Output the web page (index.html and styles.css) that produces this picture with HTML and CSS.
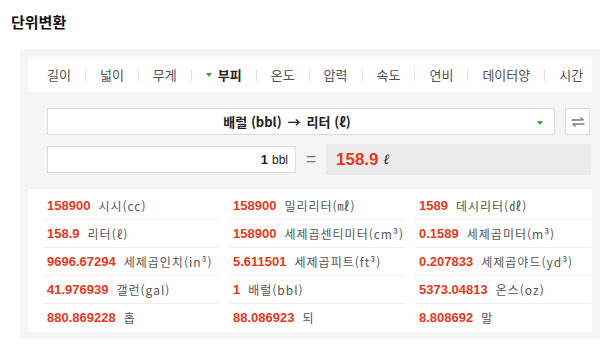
FILE: index.html
```html
<!DOCTYPE html>
<html lang="ko">
<head>
  <meta charset="UTF-8" />
  <title>단위변환</title>
  <link rel="stylesheet" href="styles.css">
</head>
<body>
  <h2 class="title">단위변환</h2>

  <div class="converter">
    <ul class="tabs">
      <li>길이</li>
      <li>넓이</li>
      <li>무게</li>
      <li class="on"><span class="tri"></span>부피</li>
      <li>온도</li>
      <li>압력</li>
      <li>속도</li>
      <li>연비</li>
      <li>데이터양</li>
      <li>시간</li>
    </ul>

    <div class="form">
      <div class="form-row">
        <div class="select">배럴 (bbl) <span class="arrow">→</span> 리터 (ℓ)<span class="caret"></span></div>
        <button class="swap" type="button">
          <svg width="14" height="10" viewBox="0 0 14 10">
            <path d="M0.5 3h12M9.5 0.5l3 2.5" stroke="#7a7a7a" stroke-width="1.3" fill="none"/>
            <path d="M13.5 7h-12M4.5 9.5l-3-2.5" stroke="#7a7a7a" stroke-width="1.3" fill="none"/>
          </svg>
        </button>
      </div>
      <div class="form-row">
        <div class="input"><b>1</b> bbl</div>
        <span class="equals">=</span>
        <div class="output"><span class="value">158.9</span> <span class="unit">ℓ</span></div>
      </div>
    </div>

    <ul class="results">
      <li><em>158900</em>시시(cc)</li>
      <li><em>158900</em>밀리리터(㎖)</li>
      <li><em>1589</em>데시리터(㎗)</li>
      <li><em>158.9</em>리터(ℓ)</li>
      <li><em>158900</em>세제곱센티미터(cm³)</li>
      <li><em>0.1589</em>세제곱미터(m³)</li>
      <li><em>9696.67294</em>세제곱인치(in³)</li>
      <li><em>5.611501</em>세제곱피트(ft³)</li>
      <li><em>0.207833</em>세제곱야드(yd³)</li>
      <li><em>41.976939</em>갤런(gal)</li>
      <li><em>1</em>배럴(bbl)</li>
      <li><em>5373.04813</em>온스(oz)</li>
      <li class="last"><em>880.869228</em>홉</li>
      <li class="last"><em>88.086923</em>되</li>
      <li class="last"><em>8.808692</em>말</li>
    </ul>
  </div>
</body>
</html>
```

FILE: styles.css
```css
body {
  margin: 0;
  background: #fff;
  font-family: "Noto Sans CJK KR", "Liberation Sans", sans-serif;
  color: #333;
  overflow: hidden;
}

.title {
  margin: 12px 0 0 11px;
  font-size: 15px;
  line-height: 20px;
  font-weight: bold;
  color: #111;
}

.converter {
  margin: 17px 0 0 20px;
  width: 564px;
  padding: 8px 8px 7px;
  background: #f5f5f5;
}

/* tabs */
.tabs {
  list-style: none;
  margin: 0;
  padding: 0 0 0 5px;
  height: 35px;
  display: flex;
  align-items: center;
  background: #fff;
}

.tabs li {
  flex-shrink: 0;
  white-space: nowrap;
  padding: 0 14px;
  font-size: 13px;
  line-height: 12px;
  color: #505050;
  display: flex;
  align-items: center;
}

.tabs li + li {
  border-left: 1px solid #e2e2e2;
}

.tabs li.on {
  font-weight: bold;
  color: #222;
}

.tri {
  width: 0;
  height: 0;
  border-left: 3px solid transparent;
  border-right: 3px solid transparent;
  border-top: 4px solid #2ea82e;
  margin-right: 6px;
}

/* form */
.form {
  padding: 16px 0 14px 19px;
  display: flex;
  flex-direction: column;
  gap: 9px;
}

.form-row {
  display: flex;
  align-items: center;
}

.select {
  width: 478px;
  height: 25px;
  padding-right: 28px;
  border: 1px solid #dcdcdc;
  background: #fff;
  display: flex;
  align-items: center;
  justify-content: center;
  font-size: 13px;
  font-weight: bold;
  color: #222;
  position: relative;
}

.select .arrow {
  margin: 0 6px;
}

.caret {
  position: absolute;
  right: 11px;
  top: 12px;
  width: 0;
  height: 0;
  border-left: 3px solid transparent;
  border-right: 3px solid transparent;
  border-top: 4px solid #2ea82e;
}

.swap {
  margin-left: 10px;
  width: 25px;
  height: 27px;
  padding: 0;
  border: 1px solid #dcdcdc;
  background: #fff;
  display: flex;
  align-items: center;
  justify-content: center;
}

.input {
  width: 240px;
  height: 25px;
  padding-right: 7px;
  border: 1px solid #dcdcdc;
  background: #fff;
  display: flex;
  align-items: center;
  justify-content: flex-end;
  gap: 4px;
  font-family: "Liberation Sans", sans-serif;
  font-size: 12px;
  color: #222;
}

.input b {
  font-size: 13px;
}

.equals {
  width: 30px;
  text-align: center;
  font-family: "Liberation Sans", sans-serif;
  font-size: 18px;
  color: #777;
}

.output {
  width: 255px;
  height: 31px;
  padding-left: 10px;
  background: #ebebeb;
  display: flex;
  align-items: center;
  gap: 5px;
  font-family: "Liberation Sans", sans-serif;
}

.output .value {
  font-size: 17px;
  font-weight: bold;
  color: #e8381c;
}

.output .unit {
  font-family: "DejaVu Serif", serif;
  font-size: 14px;
  font-weight: bold;
  font-style: italic;
  color: #111;
}

/* results */
.results {
  list-style: none;
  margin: 0;
  padding: 3px 0 0 15px;
  background: #fff;
  display: grid;
  grid-template-columns: repeat(3, 176px);
  column-gap: 10px;
}

.results li {
  height: 17px;
  padding: 5px 0 5px 4px;
  border-bottom: 1px solid #efefef;
  display: flex;
  align-items: center;
  font-size: 12px;
  letter-spacing: 1px;
  color: #555;
  white-space: nowrap;
}

.results li.last {
  border-bottom-color: transparent;
}

.results em {
  font-style: normal;
  font-family: "Liberation Sans", sans-serif;
  font-size: 13px;
  font-weight: bold;
  letter-spacing: 0;
  color: #e8381c;
  margin-right: 8px;
}
```
